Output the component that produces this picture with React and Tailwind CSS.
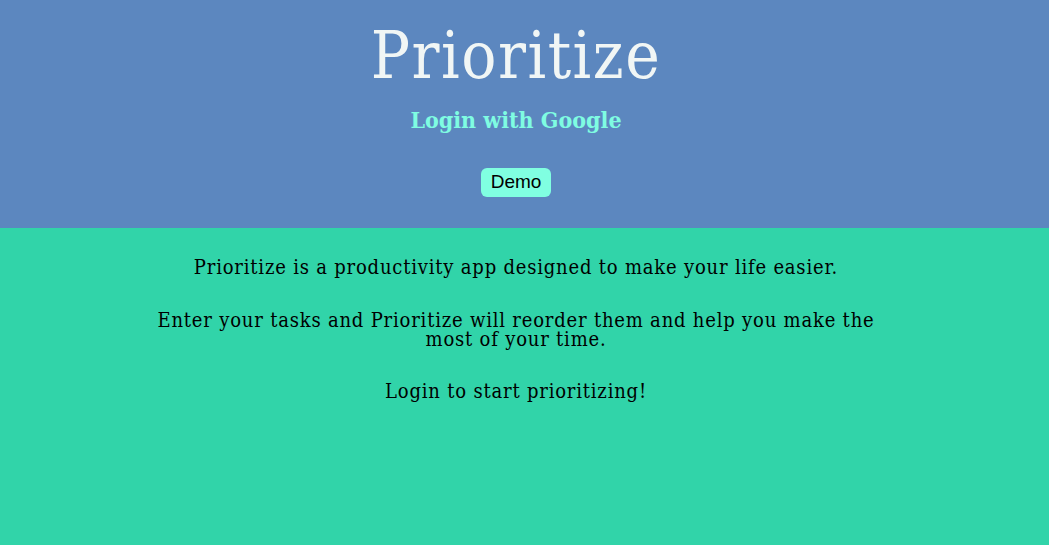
import React from 'react';

export default function App() {
  return (
    <div className="min-h-screen w-full bg-[#31d4a9] flex flex-col font-['DejaVu_Serif','Liberation_Serif',serif] [font-stretch:condensed]">
      <header className="bg-[#5c87bf] h-[228px] flex flex-col items-center pr-[17px]">
        <h1 className="text-[#f1f6f5] text-[65px] leading-none mt-[23px] tracking-[1.5px]">
          Prioritize
        </h1>
        <a className="text-[#7ffce2] text-[23px] font-bold mt-[20px] leading-none">
          Login with Google
        </a>
        <button className="mt-[37px] bg-[#80ffe1] rounded-md px-[10px] h-[29px] text-[19px] text-black font-['Liberation_Sans',Arial,sans-serif] [font-stretch:normal]">
          Demo
        </button>
      </header>
      <main className="flex flex-col items-center pr-[17px] pt-[30px] text-black text-[20px] leading-[19px] tracking-[0.8px] text-center">
        <p className="max-w-[725px]">Prioritize is a productivity app designed to make your life easier.</p>
        <p className="max-w-[725px] mt-[34px]">Enter your tasks and Prioritize will reorder them and help you make the most of your time.</p>
        <p className="max-w-[725px] mt-[33px]">Login to start prioritizing!</p>
      </main>
    </div>
  );
}
